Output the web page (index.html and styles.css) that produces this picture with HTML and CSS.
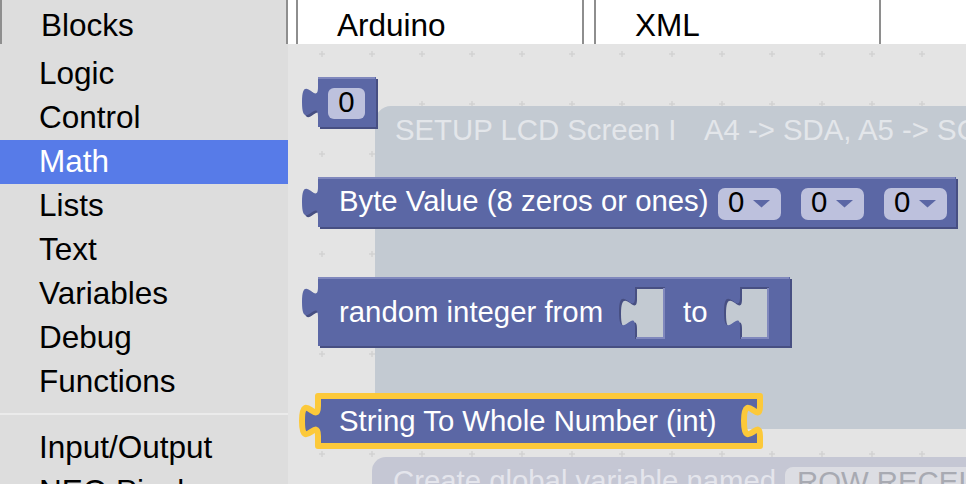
FILE: index.html
```html
<!DOCTYPE html>
<html>
<head>
<meta charset="utf-8">
<link rel="stylesheet" href="styles.css">
</head>
<body>
<div class="app">
  <div class="tabs">
    <div class="tab tab-blocks">Blocks</div>
    <div class="tab-gap gap-a"></div>
    <div class="tab">Arduino</div>
    <div class="tab-gap gap-b"></div>
    <div class="tab tab-xml">XML</div>
    <div class="tab-rest"></div>
  </div>
  <div class="main">
    <nav class="toolbox">
      <div class="tb-item">Logic</div>
      <div class="tb-item">Control</div>
      <div class="tb-item selected">Math</div>
      <div class="tb-item">Lists</div>
      <div class="tb-item">Text</div>
      <div class="tb-item">Variables</div>
      <div class="tb-item">Debug</div>
      <div class="tb-item">Functions</div>
      <div class="tb-sep"></div>
      <div class="tb-item">Input/Output</div>
      <div class="tb-item">NEO Pixel</div>
    </nav>
    <div class="workspace">
      <svg class="ws-svg" width="678" height="440" viewBox="288 44 678 440" xmlns="http://www.w3.org/2000/svg">
        <defs>
          <pattern id="grid" x="297" y="29" width="50" height="50" patternUnits="userSpaceOnUse">
            <path class="grid-cross" d="M22,25 H28 M25,22 V28"/>
          </pattern>
        </defs>
        <rect class="ws-bg" x="288" y="44" width="678" height="440"/>
        <rect x="288" y="44" width="678" height="440" fill="url(#grid)"/>

        <!-- faded workspace blocks behind the flyout -->
        <path class="ghost-setup" d="M375,122 A16,16 0 0 1 391,106 H980 V429 H375 Z"/>
        <text class="ghost-text" x="395" y="140">SETUP LCD Screen I</text>
        <text class="ghost-text" x="704" y="140">A4 -&gt; SDA, A5 -&gt; SCL</text>

        <path class="ghost-var" d="M372,471 A14,14 0 0 1 386,457 H980 V500 H372 Z"/>
        <text class="ghost-text2" x="393" y="491">Create global variable named</text>
        <rect class="ghost-field" x="785" y="467" width="220" height="40" rx="8"/>
        <text class="ghost-field-text" x="797" y="492">ROW RECEIVED</text>

        <!-- number block -->
        <g transform="translate(318,77)">
          <path class="b-dark" transform="translate(2,2)" d="M0,0 H58 V50 H0 V40 c 0,-20 -16,16 -16,-15 s 16,5 16,-15 Z"/>
          <path class="b-main" d="M0,0 H58 V50 H0 V40 c 0,-20 -16,16 -16,-15 s 16,5 16,-15 Z"/>
          <path class="b-light" d="M0,1 H57"/>
          <rect class="b-field" x="10" y="11" width="37" height="31" rx="6"/>
          <text class="b-field-text" x="28.5" y="35" text-anchor="middle">0</text>
        </g>

        <!-- byte value block -->
        <g transform="translate(318,177)">
          <path class="b-dark" transform="translate(2,2)" d="M0,0 H638 V50 H0 V40 c 0,-20 -16,16 -16,-15 s 16,5 16,-15 Z"/>
          <path class="b-main" d="M0,0 H638 V50 H0 V40 c 0,-20 -16,16 -16,-15 s 16,5 16,-15 Z"/>
          <path class="b-light" d="M0,1 H637"/>
          <text class="b-text" x="21" y="34">Byte Value (8 zeros or ones)</text>
          <rect class="b-field" x="400" y="11" width="63" height="32" rx="7"/>
          <text class="b-field-text" x="410" y="35">0</text>
          <path class="b-arrow" d="M435,23 h17 l-8.5,7.5 z"/>
          <rect class="b-field" x="483" y="11" width="63" height="32" rx="7"/>
          <text class="b-field-text" x="493" y="35">0</text>
          <path class="b-arrow" d="M518,23 h17 l-8.5,7.5 z"/>
          <rect class="b-field" x="566" y="11" width="63" height="32" rx="7"/>
          <text class="b-field-text" x="576" y="35">0</text>
          <path class="b-arrow" d="M601,23 h17 l-8.5,7.5 z"/>
        </g>

        <!-- random integer block -->
        <g transform="translate(318,277)">
          <path class="b-dark" fill-rule="evenodd" transform="translate(2,2)" d="M0,0 H472 V69 H0 V40 c 0,-20 -16,16 -16,-15 s 16,5 16,-15 Z M317,10 H347 V62 H317 V50 c 0,-20 -16,16 -16,-15 s 16,5 16,-15 Z M422,10 H451 V62 H422 V50 c 0,-20 -16,16 -16,-15 s 16,5 16,-15 Z"/>
          <path class="b-main" fill-rule="evenodd" d="M0,0 H472 V69 H0 V40 c 0,-20 -16,16 -16,-15 s 16,5 16,-15 Z M317,10 H347 V62 H317 V50 c 0,-20 -16,16 -16,-15 s 16,5 16,-15 Z M422,10 H451 V62 H422 V50 c 0,-20 -16,16 -16,-15 s 16,5 16,-15 Z"/>
          <path class="b-light" d="M0,1 H471 M318,61 H346 V11 M423,61 H450 V11"/>
          <text class="b-text" x="21" y="45">random integer from</text>
          <text class="b-text" x="365" y="45">to</text>
        </g>

        <!-- selected string to number block -->
        <g transform="translate(318,396)">
          <path class="b-main b-selected" d="M0,0 H442 V10 c 0,20 -16,-16 -16,15 s 16,-5 16,15 V50 H0 V40 c 0,-20 -16,16 -16,-15 s 16,5 16,-15 Z"/>
          <text class="b-text" x="21" y="35">String To Whole Number (int)</text>
        </g>
      </svg>
    </div>
  </div>
</div>
</body>
</html>
```

FILE: styles.css
```css
* {
  box-sizing: border-box;
}

html, body {
  margin: 0;
  padding: 0;
}

body {
  width: 966px;
  height: 484px;
  overflow: hidden;
  background: #fff;
  font-family: "Liberation Sans", Arial, sans-serif;
  color: #000;
}

.app {
  display: flex;
  flex-direction: column;
  width: 966px;
  height: 484px;
}

.tabs {
  display: flex;
  height: 44px;
  flex: none;
  background: #fff;
}

.tab {
  width: 288px;
  height: 44px;
  border-left: 2px solid #8e8e8e;
  border-right: 2px solid #8e8e8e;
  padding: 6px 0 0 39px;
  font-size: 31.5px;
  line-height: 38px;
  white-space: nowrap;
}

.tab-blocks {
  background: #ddd;
}

.tab-xml {
  width: 287px;
}

.gap-a {
  width: 8px;
}

.gap-b {
  width: 10px;
}

.tab-rest {
  flex: 1;
}

.main {
  display: flex;
  height: 440px;
}

.toolbox {
  width: 288px;
  flex: none;
  background: #ddd;
  padding-top: 8px;
  overflow: hidden;
}

.tb-item {
  height: 44px;
  padding: 0 0 2px 39px;
  font-size: 31.5px;
  line-height: 42px;
  white-space: nowrap;
}

.tb-item.selected {
  background: #577be8;
  color: #fff;
}

.tb-sep {
  height: 2px;
  background: #ebebeb;
  margin: 9px 0 11px;
}

.workspace {
  flex: 1;
  overflow: hidden;
}

.ws-svg {
  display: block;
}

.ws-bg {
  fill: #e4e4e4;
}

.grid-cross {
  stroke: #d3d3d3;
  stroke-width: 1.5;
  fill: none;
}

.ghost-setup {
  fill: #c3cad2;
}

.ghost-var {
  fill: #c5c7d4;
}

.ghost-text {
  font-family: "Liberation Sans", Arial, sans-serif;
  font-size: 29.33px;
  fill: #e3e6ea;
}

.ghost-text2 {
  font-family: "Liberation Sans", Arial, sans-serif;
  font-size: 29.33px;
  fill: #e4e5ec;
}

.ghost-field {
  fill: #dcdde3;
}

.ghost-field-text {
  font-family: "Liberation Sans", Arial, sans-serif;
  font-size: 29.33px;
  fill: #a8aab2;
}

.b-main {
  fill: #5b67a5;
}

.b-dark {
  fill: #474f82;
}

.b-light {
  fill: none;
  stroke: #8088bd;
  stroke-width: 2;
}

.b-selected {
  stroke: #fcc93a;
  stroke-width: 6;
  stroke-linejoin: round;
}

.b-text {
  font-family: "Liberation Sans", Arial, sans-serif;
  font-size: 29.33px;
  fill: #fff;
}

.b-field {
  fill: #bdc1dd;
}

.b-field-text {
  font-family: "Liberation Sans", Arial, sans-serif;
  font-size: 29.33px;
  fill: #000;
}

.b-arrow {
  fill: #5b67a5;
}
```
